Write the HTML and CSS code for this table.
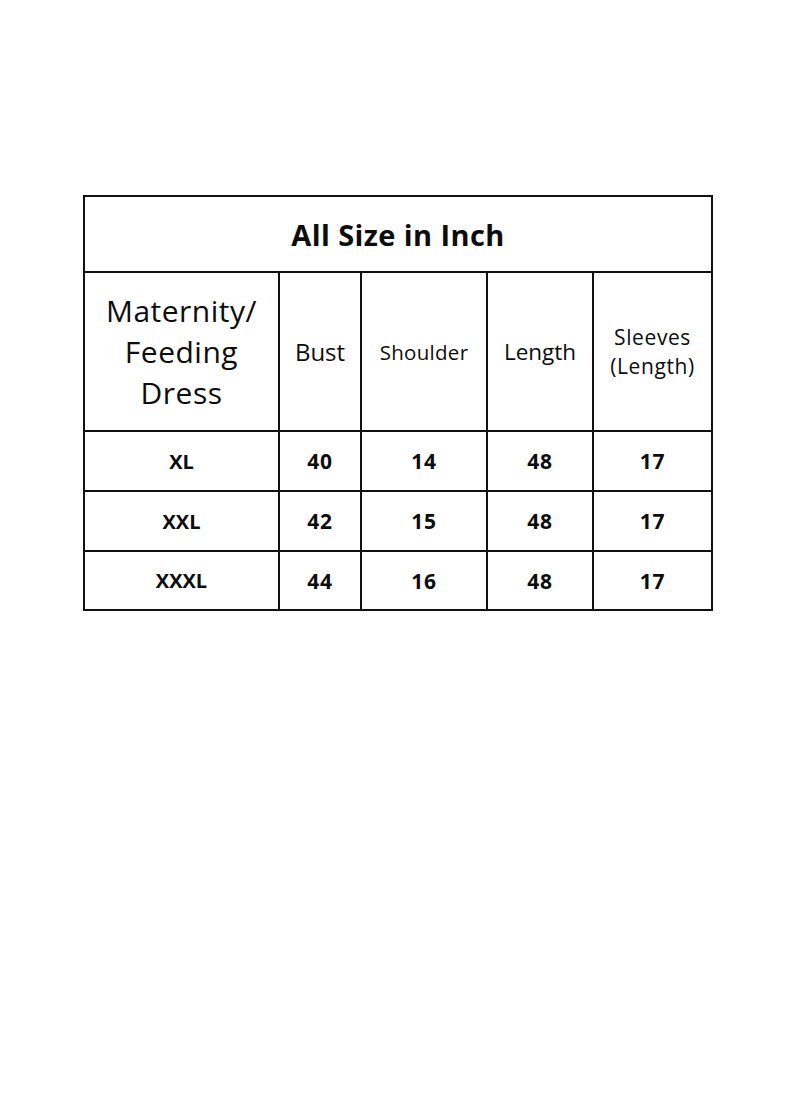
FILE: index.html
```html
<!DOCTYPE html>
<html>
<head>
<meta charset="utf-8">
<link rel="stylesheet" href="styles.css">
</head>
<body>
<div class="page">
  <table class="size-table">
    <colgroup>
      <col class="c1"><col class="c2"><col class="c3"><col class="c4"><col class="c5">
    </colgroup>
    <tr class="title-row"><th colspan="5" class="title">All Size in Inch</th></tr>
    <tr class="head-row">
      <th class="h-main">Maternity/<br>Feeding<br>Dress</th>
      <th class="h-bust">Bust</th>
      <th class="h-shoulder">Shoulder</th>
      <th class="h-length">Length</th>
      <th class="h-sleeves">Sleeves<br>(Length)</th>
    </tr>
    <tr class="data-row"><td class="size">XL</td><td>40</td><td>14</td><td>48</td><td>17</td></tr>
    <tr class="data-row"><td class="size">XXL</td><td>42</td><td>15</td><td>48</td><td>17</td></tr>
    <tr class="data-row last"><td class="size">XXXL</td><td>44</td><td>16</td><td>48</td><td>17</td></tr>
  </table>
</div>
</body>
</html>
```
FILE: styles.css
```css
html, body {
  margin: 0;
  padding: 0;
  background: #fff;
}
.page {
  padding: 195px 0 0 83px;
  font-family: "Open Sans", "Noto Sans", sans-serif;
  color: #0d0d0d;
}
.size-table {
  border-collapse: collapse;
  width: 628px;
  table-layout: fixed;
}
.size-table th, .size-table td {
  border: 2px solid #111;
  text-align: center;
  vertical-align: middle;
  padding: 0;
}
.c1 { width: 195px; }
.c2 { width: 82px; }
.c3 { width: 126px; }
.c4 { width: 106px; }
.c5 { width: 119px; }
.title-row { height: 76px; }
.title {
  font-size: 29px;
  font-weight: 700;
  letter-spacing: 0.4px;
}
.head-row { height: 159px; }
.head-row th { font-weight: 400; }
.h-main {
  font-size: 30px;
  line-height: 41px;
  letter-spacing: 0.5px;
  padding-bottom: 4px;
}
.h-bust { font-size: 24px; }
.h-shoulder { font-size: 20.5px; letter-spacing: 0.3px; }
.h-length { font-size: 22.5px; }
.h-sleeves {
  font-size: 21px;
  letter-spacing: 0.6px;
  line-height: 29px;
}
.data-row { height: 60px; }
.data-row.last { height: 59px; }
.data-row td {
  font-size: 21px;
  font-weight: 700;
  letter-spacing: 0.8px;
}
.data-row td.size {
  font-size: 20px;
  letter-spacing: 0;
}
```
